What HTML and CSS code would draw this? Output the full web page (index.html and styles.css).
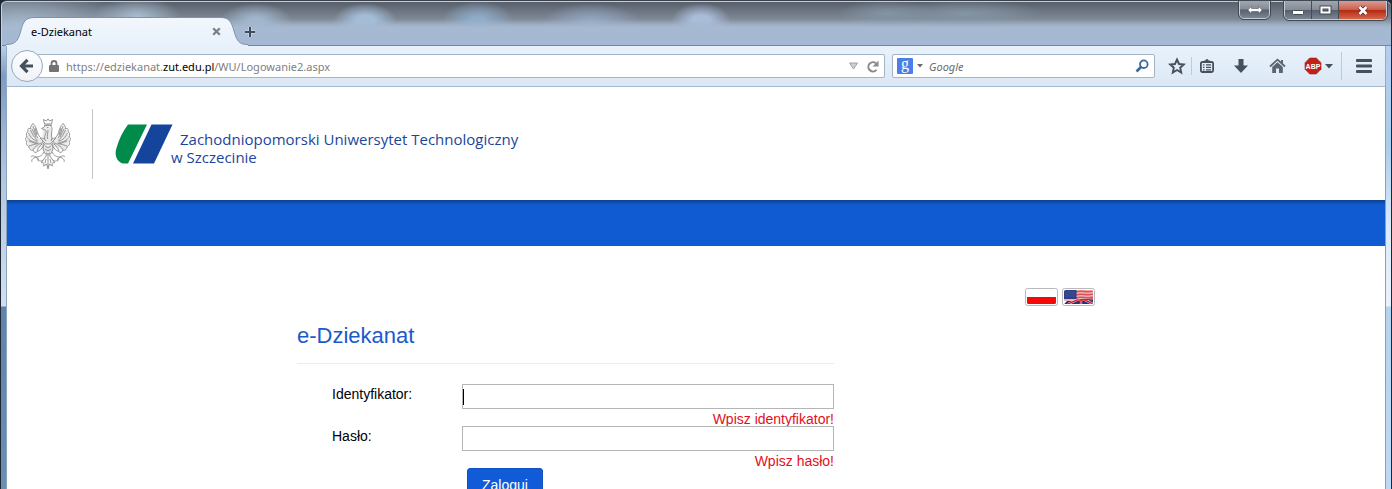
FILE: index.html
```
<!DOCTYPE html>
<html lang="pl">
<head>
    <meta charset="UTF-8">
    <meta name="viewport" content="width=device-width, initial-scale=1.0">
    <title>e-Dziekanat</title>
    <link rel="stylesheet" href="styles.css">
</head>
<body>
    <div class="browser">
        <!-- Title bar with tabs -->
        <div class="titlebar">
            <div class="tab">
                <svg class="tab-shape" width="242" height="30" viewBox="0 0 242 30">
                    <defs>
                        <linearGradient id="tabFill" x1="0" y1="0" x2="0" y2="1">
                            <stop offset="0" stop-color="#f3f7fd"/>
                            <stop offset="1" stop-color="#e8f1fb"/>
                        </linearGradient>
                    </defs>
                    <path d="M0 30V28.500C9 28.500 12 25 14.500 16C17 6 19 1.500 29 1.500H214C223 1.500 225 5 228 15C230.500 24 233 28.500 241 28.500H242V30Z" fill="url(#tabFill)"/>
                    <path d="M0 28.500C9 28.500 12 25 14.500 16C17 6 19 1.500 29 1.500H214C223 1.500 225 5 228 15C230.500 24 233 28.500 241 28.500H242" fill="none" stroke="#8093aa"/>
                </svg>
                <span class="tab-title">e-Dziekanat</span>
                <button class="tab-close" aria-label="Zamknij kartę">
                    <svg width="9" height="9" viewBox="0 0 9 9"><path d="M1.200 1.200l6.600 6.600M7.800 1.200l-6.600 6.600" stroke="#7d8085" stroke-width="2.300"/></svg>
                </button>
            </div>
            <button class="tab-new" aria-label="Nowa karta">
                <svg width="12" height="12" viewBox="0 0 12 12"><path d="M6 1v10M1 6h10" stroke="#e6edf5" stroke-width="4" opacity=".4"/><path d="M6 1v10M1 6h10" stroke="#3f4c5c" stroke-width="2"/></svg>
            </button>
            <div class="controls">
                <button class="control resize" aria-label="Zmień rozmiar">
                    <svg width="16" height="10" viewBox="0 0 16 10"><path d="M.800 5L4.500 1.200V3.500H11.500V1.200L15.200 5L11.500 8.800V6.500H4.500V8.800Z" fill="#fff" stroke="#40454e" stroke-width=".5"/></svg>
                </button>
                <div class="control-group">
                    <button class="control minimize" aria-label="Minimalizuj">
                        <svg width="12" height="12" viewBox="0 0 12 12"><rect x=".5" y="6.500" width="11" height="4" rx="1" fill="#fff" stroke="#444a54"/></svg>
                    </button>
                    <button class="control maximize" aria-label="Maksymalizuj">
                        <svg width="13" height="11" viewBox="0 0 13 11"><path d="M2.500 2.500h8v5h-8z" fill="none" stroke="#444a54" stroke-width="4"/><path d="M2.500 2.500h8v5h-8z" fill="none" stroke="#fff" stroke-width="2"/></svg>
                    </button>
                    <button class="control close" aria-label="Zamknij">
                        <svg width="12" height="11" viewBox="0 0 12 11"><path d="M2.500 2l7 7M9.500 2l-7 7" stroke="#5d2a2a" stroke-width="4.200"/><path d="M2.500 2l7 7M9.500 2l-7 7" stroke="#fff" stroke-width="2.600"/></svg>
                    </button>
                </div>
            </div>
        </div>

        <div class="frame">
            <!-- Navigation toolbar -->
            <div class="toolbar">
                <button class="back" aria-label="Wstecz">
                    <svg width="16" height="16" viewBox="0 0 16 16"><path d="M8.500 1.800L2.500 8l6 6.200M3 8h11" fill="none" stroke="#46505c" stroke-width="3.200"/></svg>
                </button>
                <div class="urlbar">
                    <svg class="lock" width="10" height="12" viewBox="0 0 10 12"><path d="M2.500 6V3.500a2.500 2.500 0 0 1 5 0V6" fill="none" stroke="#737373" stroke-width="1.800"/><rect y="5" width="10" height="7" rx="1" fill="#737373"/></svg>
                    <div class="url">https://edziekanat.<span class="domain">zut.edu.pl</span>/WU/Logowanie2.aspx</div>
                    <svg width="11" height="8" viewBox="0 0 11 8"><path d="M1.500 1h8L5.500 7z" fill="#cfcfcf" stroke="#a0a0a0"/></svg>
                    <button class="reload" aria-label="Odśwież">
                        <svg width="13" height="13" viewBox="0 0 13 13"><path d="M10.500 9.800A4.600 4.600 0 1 1 9.800 3.200" fill="none" stroke="#8b8b8b" stroke-width="2"/><path d="M12.500 .5V6.500H6.500Z" fill="#8b8b8b"/></svg>
                    </button>
                </div>
                <div class="searchbar">
                    <button class="engine" aria-label="Wyszukiwarka">
                        <span class="engine-logo">g</span>
                        <svg width="6" height="4" viewBox="0 0 6 4"><path d="M0 0h6L3 3.500z" fill="#6b6b6b"/></svg>
                    </button>
                    <input class="search-input" type="text" placeholder="Google" aria-label="Szukaj">
                    <button class="search-go" aria-label="Szukaj">
                        <svg width="14" height="14" viewBox="0 0 14 14"><circle cx="8.800" cy="5.200" r="3.800" fill="none" stroke="#3a6a9c" stroke-width="1.800"/><path d="M6 8L1.500 12.500" stroke="#3a6a9c" stroke-width="2.600"/></svg>
                    </button>
                </div>
                <div class="tools">
                    <button class="tool star" aria-label="Dodaj do zakładek">
                        <svg width="18" height="18" viewBox="0 0 18 18"><path d="M9 2.500l2 4.500 4.800.5-3.600 3.200 1 4.800L9 13l-4.200 2.500 1-4.800L2.200 7.500 7 7z" fill="none" stroke="#46505c" stroke-width="1.900"/></svg>
                    </button>
                    <button class="tool list" aria-label="Zakładki">
                        <svg width="16" height="16" viewBox="0 0 16 16"><rect x="1.900" y="4" width="12.200" height="10" rx="1.500" fill="none" stroke="#46505c" stroke-width="1.800"/><path d="M5 4V2.500h1.500a1.500 1.500 0 0 1 3 0H11V4z" fill="#46505c"/><path d="M4 6.800h1.500M7 6.800h5M4 9.300h1.500M7 9.300h5M4 11.800h1.500M7 11.800h5" stroke="#46505c" stroke-width="1.300"/></svg>
                    </button>
                    <button class="tool download" aria-label="Pobrane">
                        <svg width="16" height="16" viewBox="0 0 16 16"><path d="M5.500 1h5v6.500H15L8 15 1 7.500h4.500z" fill="#46505c"/></svg>
                    </button>
                    <button class="tool home" aria-label="Strona startowa">
                        <svg width="17" height="16" viewBox="0 0 17 16"><path d="M1 8.500L8.500 1.700 16 8.500" fill="none" stroke="#5b6571" stroke-width="1.800"/><path d="M3.200 9L8.500 4.200 13.800 9V15H10V10.500H7V15H3.200z" fill="#5b6571"/><path d="M12 2h2v4l-2-1.800z" fill="#5b6571"/></svg>
                    </button>
                    <button class="tool abp" aria-label="Adblock Plus">
                        <svg width="18" height="18" viewBox="0 0 18 18"><path d="M5.700 1h6.600L17 5.700v6.600L12.300 17H5.700L1 12.300V5.700z" fill="#c32018" stroke="#98231c" stroke-width=".6"/><text class="abp-text" x="9" y="12" text-anchor="middle">ABP</text></svg>
                        <svg width="8" height="5" viewBox="0 0 8 5"><path d="M0 0h8L4 4.500z" fill="#46505c"/></svg>
                    </button>
                    <button class="tool menu" aria-label="Menu">
                        <svg width="16" height="14" viewBox="0 0 16 14"><path d="M1 1.500h14M1 7h14M1 12.500h14" stroke="#46505c" stroke-width="2.800" stroke-linecap="round"/></svg>
                    </button>
                </div>
            </div>

            <!-- Page -->
            <div class="page">
                <header class="header">
                    <svg class="eagle" width="46" height="52" viewBox="0 0 46 52" fill="none" stroke="#8a8a8a" stroke-width=".9">
                        <path d="M7 7C5 12 2 16 2 21c0 4 1 8 4 11l10-3 3 6 4 2 4-2 3-6 10 3c3-3 4-7 4-11 0-5-3-9-5-14-4 4-4 9-7 12l-5 2-1-11-4-2-4 2-1 11-5-2C10 16 11 11 7 7z" fill="#e9e9e9" stroke="none"/>
                        <path d="M19.500 6L18.500 1.500 21.500 3 23 .8 24.500 3 27.500 1.500 26.500 6zM19 7.200h8"/>
                        <path d="M26 8c-2-1.500-6-1-7 1l-2.500 1.500L20 12c2 .5 1 3 .2 5-.8 2-1.200 4 .8 6M26 8c2 2 .5 5 .5 8 0 3 1 5-.5 7M22 9.500h1.500M23 12c0 3-1 5-.5 9"/>
                        <path d="M20 21c-3 0-6-2-7-5C11.500 12 11 8 8 5.500 6 8 5 9 5.500 11 3 9.500 2.500 11 3 14c-2 0-2 3-1 5-2 0-1.500 3 0 5-1.500 1 0 4 2 5 0 2 2 4 4 3 1 3 3 3 5 1 2 0 4-3 7-7"/>
                        <path d="M26 21c3 0 6-2 7-5 1.500-4 2-8 5-10.500 2 2.500 3 3.500 2.500 5.500 2.500-1.500 3 0 2.500 3 2 0 2 3 1 5 2 0 1.500 3 0 5 1.500 1 0 4-2 5 0 2-2 4-4 3-1 3-3 3-5 1-2 0-4-3-7-7"/>
                        <path d="M8 8c2 4 2 9 5 12M5.500 12c2 4 3 7 7 10M3.500 15c2 4 4 7 9 8M2.500 20c3 3 6 5 10 4M4 28c3-1 7-2 10-3M8 32c1-3 5-5 8-7M12 33c1-3 3-5 5-7M10 10l2 7M15 20l3 3-2 4M7 11l4 8M4 23l8 3"/>
                        <path d="M38 8c-2 4-2 9-5 12M40.500 12c-2 4-3 7-7 10M42.500 15c-2 4-4 7-9 8M43.500 20c-3 3-6 5-10 4M42 28c-3-1-7-2-10-3M38 32c-1-3-5-5-8-7M34 33c-1-3-3-5-5-7M36 10l-2 7M31 20l-3 3 2 4M39 11l-4 8M42 23l-8 3"/>
                        <path d="M18 23c1 2 3 3 5 3s4-1 5-3M18.500 25c-1 5 0 9 3 12h3c3-3 4-7 3-12M20 28l3 2 3-2M20 31l3 2 3-2M21 35l2 1 2-1"/>
                        <path d="M19 34c-2 4-5 5-8 5 2 1 3 2 2 4M11 39c-2-1-4-2-5 0M11 39c-3 1-5 3-4 5M12 40c1 3 4 4 6 2M27 34c2 4 5 5 8 5-2 1-3 2-2 4M35 39c2-1 4-2 5 0M35 39c3 1 5 3 4 5M34 40c-1 3-4 4-6 2"/>
                        <path d="M21.500 37c-1 3-4 5-5 8 2-1 3 0 2 3l3-2 1.500 5 1.500-5 3 2c-1-3 0-4 2-3-1-3-4-5-5-8M23 38v11M21 41l-1 4M25 41l1 4"/>
                    </svg>
                    <div class="divider"></div>
                    <svg class="logo" width="58" height="40" viewBox="0 0 58 40">
                        <path d="M13 .5H32L13 39.500H8C2 38 -1 31 1.500 24C4 15 8 7 13 .5Z" fill="#008b4a"/>
                        <path d="M36.500 .5H57.500L39 39.500H18Z" fill="#15449c"/>
                    </svg>
                    <div class="uni-name">
                        <span class="uni-first">Zachodniopomorski Uniwersytet Technologiczny</span><br>
                        w Szczecinie
                    </div>
                </header>
                <nav class="navband" aria-label="Menu główne"></nav>

                <main class="content">
                    <div class="langs">
                        <a href="#pl" class="flag" aria-label="Polski">
                            <svg width="33" height="18" viewBox="0 0 33 18"><rect x=".5" y=".5" width="32" height="17" rx="2" fill="#fff" stroke="#b9b9b9"/><path d="M2 9h29v5.500a1.500 1.500 0 0 1-1.500 1.500h-26A1.500 1.500 0 0 1 2 14.500z" fill="#f50808"/></svg>
                        </a>
                        <a href="#en" class="flag" aria-label="English">
                            <svg width="33" height="18" viewBox="0 0 33 18">
                                <defs><clipPath id="flagClip"><rect x="2" y="2" width="29" height="14" rx="1.500"/></clipPath></defs>
                                <rect x=".5" y=".5" width="32" height="17" rx="2" fill="#fff" stroke="#b9b9b9"/>
                                <g clip-path="url(#flagClip)">
                                    <path d="M14 2h17v8l-13 3H2v-3h12z" fill="#f3b3b3"/>
                                    <path d="M14 4c6-2 11 1 17-1M14 7c6-2 11 1 17-1M14 10c6-2 11 1 17-1" fill="none" stroke="#d8505a" stroke-width="1.500"/>
                                    <path d="M2 2h12.500v9H2z" fill="#2c3f88"/>
                                    <path d="M3.500 4h9M3.500 6h9M3.500 8h9" stroke="#5b6ca6" stroke-width=".8" stroke-dasharray="1 1"/>
                                    <path d="M2 16l3-3h10l4-2 12-1v6z" fill="#26357b"/>
                                    <path d="M6 16l9-4 16-1M23 12l8 4M19 11v5" fill="none" stroke="#fff" stroke-width="2.200"/>
                                    <path d="M6 16l9-4 16-1M23 12l8 4M19 11v5" fill="none" stroke="#d5202e" stroke-width="1.400"/>
                                </g>
                            </svg>
                        </a>
                    </div>
                    <form class="login">
                        <h1>e-Dziekanat</h1>
                        <div class="row">
                            <label for="login">Identyfikator:</label>
                            <div class="field">
                                <div class="input-wrap">
                                    <input id="login" type="text" aria-describedby="login-error">
                                    <span class="caret"></span>
                                </div>
                                <span class="error" id="login-error">Wpisz identyfikator!</span>
                            </div>
                        </div>
                        <div class="row">
                            <label for="password">Hasło:</label>
                            <div class="field">
                                <div class="input-wrap">
                                    <input id="password" type="password" aria-describedby="password-error">
                                </div>
                                <span class="error" id="password-error">Wpisz hasło!</span>
                            </div>
                        </div>
                        <button class="submit" type="submit">Zaloguj</button>
                    </form>
                </main>
            </div>
        </div>
    </div>
</body>
</html>
```
FILE: styles.css
```
* {
    box-sizing: border-box;
}
body {
    margin: 0;
    font-family: "Liberation Sans", Arial, sans-serif;
    font-size: 14px;
    color: #000;
}
button {
    margin: 0;
    padding: 0;
    border: none;
    background: none;
    cursor: pointer;
}
svg {
    display: block;
    flex: none;
}
.browser {
    display: flex;
    flex-direction: column;
    height: 100vh;
    overflow: hidden;
    background: #1c2733;
}

/* Title bar */
.titlebar {
    display: flex;
    align-items: flex-end;
    flex: none;
    height: 46px;
    margin: 0 1px;
    padding: 0 4px 0 5px;
    border-top: 1px solid #3a404c;
    border-radius: 6px 6px 0 0;
    box-shadow: inset 0 1px 0 #c3ccd8, inset 1px 0 0 #c3d3e4, inset 0 -1px 0 #75879b;
    background:
        linear-gradient(transparent 18px, #a6b9d1 27px, #a5b8d5),
        radial-gradient(ellipse 32px 18px at 364px 20px, #a3bdd6 30%, rgba(163, 189, 214, 0)),
        radial-gradient(ellipse 36px 20px at 477px 20px, #8eabc7 20%, rgba(142, 171, 199, 0)),
        radial-gradient(ellipse 50px 20px at 590px 22px, #94a8c1 10%, rgba(148, 168, 193, 0)),
        radial-gradient(ellipse 30px 18px at 700px 20px, #a9bcd9 30%, rgba(169, 188, 217, 0)),
        radial-gradient(ellipse 36px 18px at 255px 20px, #9fb5cb 20%, rgba(159, 181, 203, 0)),
        radial-gradient(ellipse 44px 20px at 136px 16px, #a9bed2, rgba(169, 190, 210, 0)),
        radial-gradient(ellipse 110px 40px at 20px 24px, #a3b6ca, rgba(163, 182, 202, 0)),
        radial-gradient(ellipse 50px 14px at 886px 13px, #8495a6, rgba(132, 149, 166, 0)),
        radial-gradient(ellipse 80px 14px at 965px 13px, #8495a6, rgba(132, 149, 166, 0)),
        linear-gradient(#5a626e 2px, #87919e 22px, #a4b6cb 28px, #a4b9d6);
}
.tab {
    position: relative;
    display: flex;
    align-items: center;
    width: 232px;
    height: 29px;
    padding: 0 17px 0 25px;
}
.tab-shape {
    position: absolute;
    left: 0;
    bottom: 0;
}
.tab-title,
.tab-close {
    position: relative;
}
.tab-title {
    flex: 1;
    font-family: "Noto Sans", "Segoe UI", sans-serif;
    font-size: 11px;
}
.tab-new {
    padding: 8px 6px;
}
.controls {
    display: flex;
    align-self: flex-start;
    gap: 14px;
    margin-left: auto;
}
.control {
    display: flex;
    align-items: center;
    justify-content: center;
    height: 18px;
    background: linear-gradient(#a1a6ae, #858c96 48%, #58606d 52%, #7a8493);
}
.resize {
    width: 31px;
    border: 1px solid #c5ccd5;
    border-top: none;
    border-radius: 0 0 5px 5px;
    outline: 1px solid #3f4855;
}
.control-group {
    display: flex;
    border: 1px solid #c5ccd5;
    border-top: none;
    border-radius: 0 0 5px 5px;
    outline: 1px solid #3f4855;
    overflow: hidden;
}
.minimize,
.maximize {
    width: 27px;
    border-right: 1px solid #444c58;
}
.close {
    width: 47px;
    background: linear-gradient(#dc9c92, #c9604e 48%, #b52b13 52%, #d4664a);
}

/* Window frame */
.frame {
    display: flex;
    flex-direction: column;
    flex: 1;
    min-height: 0;
    margin: 0 1px;
    padding: 0 5px;
    background:
        linear-gradient(#b7cfea, #7d9dc3 30px, #b0c6e0 130px, #d3dff0 260px, #5f83ab 261px, #6b8fb3) left / 5px 100% no-repeat,
        linear-gradient(#b4cdf0, #a9cdee 100px, #dbeafa 180px, #e9f2fb 260px, #b4d3ee 261px, #bcdaf4) right / 5px 100% no-repeat;
}

/* Navigation toolbar */
.toolbar {
    display: flex;
    align-items: center;
    flex: none;
    height: 41px;
    padding: 0 0 0 4px;
    border-left: 1px solid #93abc5;
    border-right: 1px solid #93abc5;
    border-bottom: 1px solid #a3b8cd;
    background: linear-gradient(#e9f2fb, #dbe8f5);
}
.back {
    position: relative;
    z-index: 1;
    display: flex;
    align-items: center;
    justify-content: center;
    flex: none;
    width: 32px;
    height: 32px;
    border: 1px solid #98a9bb;
    border-radius: 50%;
    background: linear-gradient(#fcfdfe, #eef3f9);
}
.urlbar,
.searchbar {
    display: flex;
    align-items: center;
    height: 24px;
    border: 1px solid #a5b5c8;
    border-radius: 2px;
    background: #fff;
}
.urlbar {
    flex: 1;
    gap: 7px;
    margin-left: -6px;
    padding: 0 5px 0 12px;
    border-left: none;
}
.url {
    flex: 1;
    color: #808080;
    font-family: "Noto Sans", "Segoe UI", sans-serif;
    font-size: 11px;
    white-space: nowrap;
}
.domain {
    color: #000;
}
.searchbar {
    width: 263px;
    margin-left: 7px;
    padding: 0 5px 0 4px;
}
.engine {
    display: flex;
    align-items: center;
    gap: 4px;
}
.engine-logo {
    width: 16px;
    height: 16px;
    border-radius: 1px;
    background: #4a7fea;
    color: #fff;
    font-family: "Liberation Serif", serif;
    font-size: 16px;
    line-height: 12px;
}
.search-input {
    flex: 1;
    min-width: 0;
    padding: 0 6px;
    border: none;
    outline: none;
    background: none;
    font-family: "Noto Sans", "Segoe UI", sans-serif;
    font-size: 11px;
    font-style: italic;
}
.search-input::placeholder {
    color: #6c6c6c;
}
.tools {
    display: flex;
    align-items: center;
    margin-left: 7px;
}
.tool {
    display: flex;
    align-items: center;
    justify-content: center;
    gap: 3px;
    width: 36px;
    height: 18px;
}
.star {
    width: 29px;
}
.list {
    width: 30px;
    border-left: 1px solid #bccada;
}
.download {
    width: 40px;
}
.home {
    width: 32px;
}
.abp {
    width: 48px;
    padding-left: 2px;
}
.abp-text {
    fill: #fff;
    font-family: "Liberation Sans", Arial, sans-serif;
    font-size: 7px;
    font-weight: bold;
}
.menu {
    width: 44px;
    height: 28px;
    border-left: 1px solid #bccada;
}

/* Page */
.page {
    flex: 1;
    min-height: 0;
    overflow: hidden;
    border-left: 1px solid #8aa3be;
    border-right: 1px solid #7fa3c8;
    background: #fff;
}
.header {
    display: flex;
    align-items: center;
    height: 113px;
    padding-left: 18px;
}
.divider {
    width: 1px;
    height: 70px;
    margin: 0 22px 0 21px;
    background: #c4c4c4;
}
.uni-name {
    margin-left: -2px;
    padding-top: 8px;
    color: #1b469c;
    font-family: "Trebuchet MS", "Open Sans", sans-serif;
    font-size: 15px;
    line-height: 18px;
}
.uni-first {
    padding-left: 9px;
}
.navband {
    height: 46px;
    background: linear-gradient(#0e4091, #115bd2 5px);
}
.content {
    max-width: 798px;
    margin: 0 auto;
    padding-top: 42px;
}
.langs {
    display: flex;
    justify-content: flex-end;
    gap: 4px;
}
.login {
    max-width: 537px;
    margin-top: 16px;
}
.login h1 {
    margin: 0 0 20px;
    padding-bottom: 14px;
    border-bottom: 1px solid #ececec;
    color: #1c5acb;
    font-size: 22px;
    line-height: 27px;
    font-weight: normal;
}
.row {
    display: flex;
    height: 42px;
    padding-left: 35px;
}
.row label {
    width: 130px;
    line-height: 20px;
}
.field {
    flex: 1;
    display: flex;
    flex-direction: column;
}
.input-wrap {
    position: relative;
}
.field input {
    display: block;
    width: 100%;
    height: 25px;
    padding: 2px 4px;
    border: 1px solid #b5b5b5;
    background: #fff;
    font-size: 14px;
    outline: none;
}
.caret {
    position: absolute;
    left: 1px;
    top: 5px;
    width: 1px;
    height: 16px;
    background: #000;
}
.error {
    color: #e3101c;
    line-height: 20px;
    text-align: right;
}
.submit {
    width: 76px;
    height: 34px;
    margin-left: 170px;
    border: 1px solid #0f52bf;
    border-radius: 3px;
    background: #115bd9;
    color: #fff;
    font-family: inherit;
    font-size: 14px;
}
```
